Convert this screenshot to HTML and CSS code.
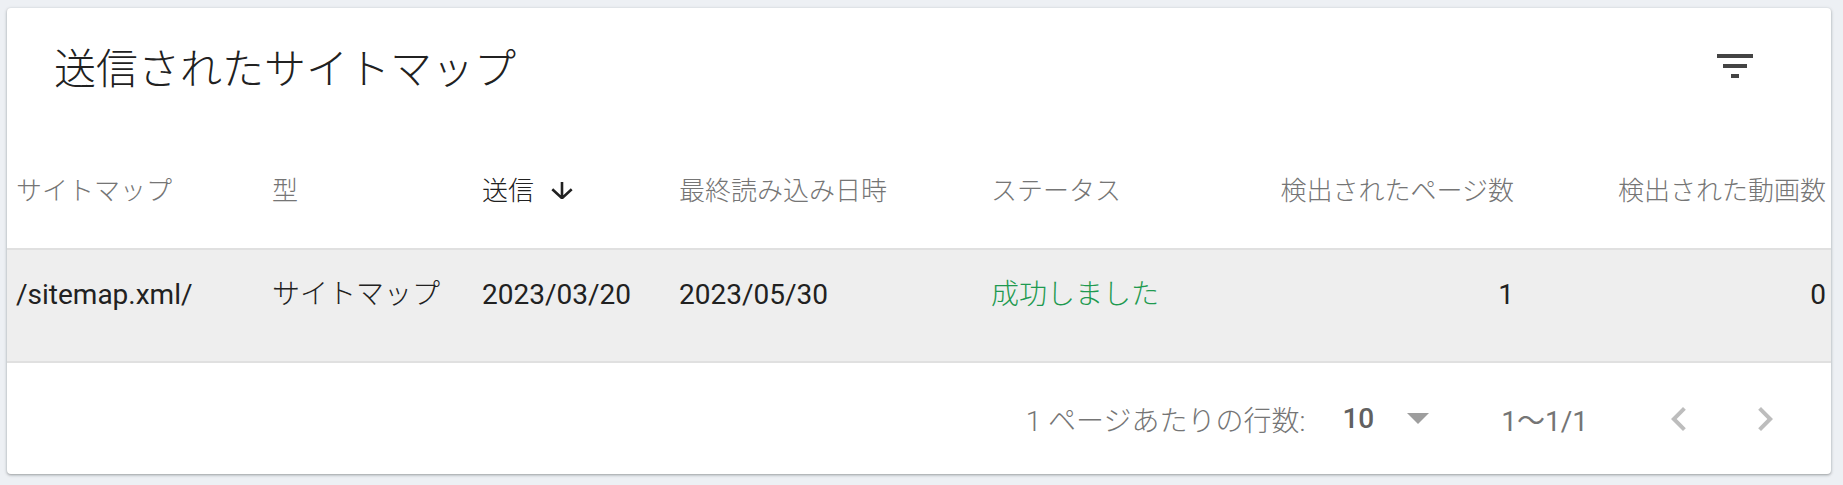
FILE: index.html
```html
<!DOCTYPE html>
<html lang="ja">
<head>
<meta charset="utf-8">
<title>送信されたサイトマップ</title>
<link rel="stylesheet" href="styles.css">
</head>
<body>
<div class="card">
  <div class="card-head">
    <h1 class="title">送信されたサイトマップ</h1>
    <button class="icon-btn filter-btn" aria-label="フィルタ">
      <svg width="48" height="48" viewBox="0 0 24 24"><path d="M10 18h4v-2h-4v2zM3 6v2h18V6H3zm3 7h12v-2H6v2z" fill="#444"/></svg>
    </button>
  </div>
  <div class="grid">
    <div class="row head-row">
      <div class="cell">サイトマップ</div>
      <div class="cell">型</div>
      <div class="cell sorted">送信<svg class="sort-arrow" width="22" height="17" viewBox="0 0 22 17"><path d="M11 0V15.5M1.3 7.2L11 16.2L20.7 7.2" fill="none" stroke="#212121" stroke-width="2.6"/></svg></div>
      <div class="cell">最終読み込み日時</div>
      <div class="cell">ステータス</div>
      <div class="cell num">検出されたページ数</div>
      <div class="cell num">検出された動画数</div>
    </div>
    <div class="row data-row">
      <div class="cell">/sitemap.xml/</div>
      <div class="cell jp">サイトマップ</div>
      <div class="cell">2023/03/20</div>
      <div class="cell">2023/05/30</div>
      <div class="cell jp ok">成功しました</div>
      <div class="cell num">1</div>
      <div class="cell num">0</div>
    </div>
  </div>
  <div class="pager">
    <span class="pager-label">1 ページあたりの行数:</span>
    <span class="pager-size">10</span>
    <svg class="pager-drop" width="22" height="11" viewBox="0 0 22 11"><path d="M0 0H22L11 11Z" fill="#9e9e9e"/></svg>
    <span class="pager-range">1〜1/1</span>
    <button class="icon-btn prev" aria-label="前へ">
      <svg width="48" height="48" viewBox="0 0 24 24"><path d="M15.41 7.41L14 6l-6 6 6 6 1.41-1.41L10.83 12z" fill="#bdbdbd"/></svg>
    </button>
    <button class="icon-btn next" aria-label="次へ">
      <svg width="48" height="48" viewBox="0 0 24 24"><path d="M10 6L8.59 7.41 13.17 12l-4.58 4.59L10 18l6-6z" fill="#bdbdbd"/></svg>
    </button>
  </div>
</div>
</body>
</html>
```
FILE: styles.css
```css
html, body {
  margin: 0;
}
body {
  padding: 8px 12px 11px 7px;
  background: #edf0f4;
  font-family: Roboto, "Noto Sans CJK JP", sans-serif;
  color: #212121;
}
.card {
  background: #fff;
  border-radius: 4px;
  box-shadow: 0 1px 2px rgba(60, 64, 67, 0.3), 0 1px 3px 1px rgba(60, 64, 67, 0.15);
  height: 466px;
  overflow: hidden;
}
.card-head {
  height: 129px;
  display: flex;
  justify-content: space-between;
  align-items: flex-start;
  padding: 0 72px 0 47px;
  box-sizing: border-box;
}
.title {
  margin: 37px 0 0;
  font-size: 42px;
  line-height: 50px;
  font-weight: 300;
  color: #212121;
}
.icon-btn {
  border: 0;
  padding: 0;
  margin: 0;
  background: none;
  width: 48px;
  height: 48px;
  display: flex;
}
.filter-btn {
  margin-top: 34px;
}
.row {
  display: grid;
  grid-template-columns: 256px 210px 197px 312px 278px 259px 312px;
  height: 113px;
  box-sizing: border-box;
  border-bottom: 2px solid #e0e0e0;
}
.cell {
  padding: 0 9px;
  line-height: 32px;
  white-space: nowrap;
}
.cell.num {
  text-align: right;
  padding: 0 5px 0 0;
}
.head-row {
  align-items: center;
  font-size: 26px;
  font-weight: 300;
  color: #757575;
  padding-bottom: 2px;
}
.head-row .cell {
  padding-bottom: 2px;
}
.head-row .cell.num {
  padding-right: 5px;
}
.sorted {
  color: #212121;
  display: flex;
  align-items: center;
}
.sort-arrow {
  margin-left: 17px;
}
.data-row {
  background: #eeeeee;
  align-items: start;
  padding-top: 29px;
  font-size: 28px;
  color: #212121;
}
.jp {
  font-weight: 300;
}
.ok {
  color: #1e9a50;
}
.pager {
  height: 111px;
  display: flex;
  align-items: center;
  justify-content: flex-end;
  padding-right: 42px;
  font-size: 28px;
  color: #757575;
}
.pager-label {
  font-weight: 300;
}
.pager-size {
  margin-left: 37px;
  color: #616161;
  font-weight: 500;
}
.pager-drop {
  margin-left: 33px;
}
.pager-range {
  margin-left: 72px;
}
.prev {
  margin-left: 67px;
}
.next {
  margin-left: 38px;
}
```
